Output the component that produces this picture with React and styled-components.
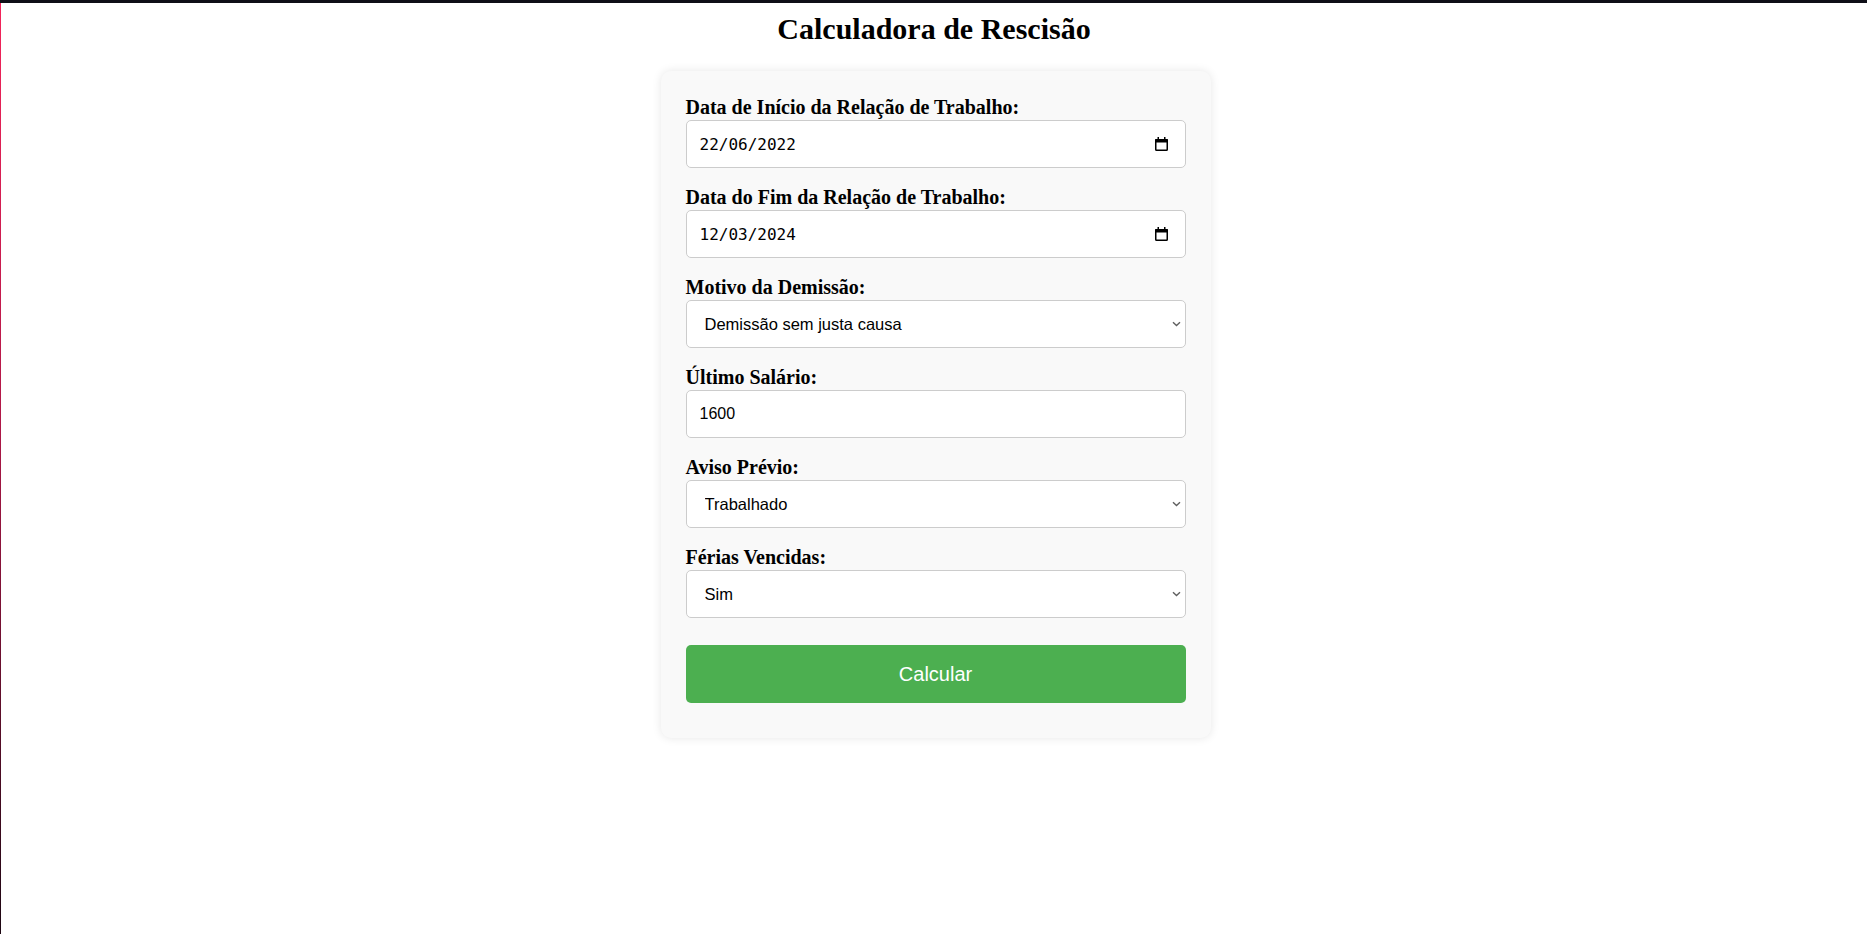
import React from "react";
import styled, { createGlobalStyle } from "styled-components";

const GlobalStyle = createGlobalStyle`
  html,
  body {
    margin: 0;
    background: #fff;
  }
  body {
    font-family: "Liberation Serif", "Times New Roman", serif;
    color: #000;
  }
`;

const Page = styled.div`
  display: flex;
  flex-direction: column;
  min-height: 100vh;
`;

const TopBar = styled.div`
  height: 3px;
  background: #0f0f17;
`;

const Body = styled.div`
  display: flex;
  flex: 1;
`;

const LeftEdge = styled.div`
  width: 1px;
  background: linear-gradient(#f3245a, #b01848 45%, #1c0612);
`;

const Main = styled.main`
  flex: 1;
  display: flex;
  flex-direction: column;
  align-items: center;
`;

const Title = styled.h1`
  margin: 9px 0 25px;
  font-size: 30px;
  line-height: 34px;
  font-weight: bold;
`;

const Card = styled.form`
  width: 500px;
  margin-left: 3px;
  padding: 25px 25px 35px;
  background: #f9f9f9;
  border-radius: 10px;
  box-shadow: 0 0 10px rgba(0, 0, 0, 0.1);
`;

const Field = styled.div`
  margin-bottom: 18px;
`;

const Label = styled.label`
  display: block;
  margin-bottom: 1px;
  font-size: 20px;
  line-height: 23px;
  font-weight: bold;
`;

const ControlWrap = styled.div`
  position: relative;
`;

const Input = styled.input`
  display: block;
  width: 100%;
  height: 48px;
  box-sizing: border-box;
  margin: 0;
  padding: 0 13px;
  border: 1px solid #ccc;
  border-radius: 5px;
  background: #fff;
  color: #000;
  font-family: ${({ $mono }) =>
    $mono ? `"DejaVu Sans Mono", "Liberation Mono", monospace` : `"Liberation Sans", Arial, sans-serif`};
  font-size: 16px;
  outline: none;
`;

const Select = styled.select`
  display: block;
  width: 100%;
  height: 48px;
  box-sizing: border-box;
  margin: 0;
  padding: 0 20px 0 18px;
  border: 1px solid #ccc;
  border-radius: 5px;
  background: #fff;
  color: #000;
  font-family: "Liberation Sans", Arial, sans-serif;
  font-size: 16.5px;
  appearance: none;
  outline: none;
`;

const Adornment = styled.span`
  position: absolute;
  top: 50%;
  right: ${({ $right }) => $right}px;
  transform: translateY(-50%);
  display: flex;
  pointer-events: none;
`;

const Button = styled.button`
  display: block;
  width: 100%;
  height: 58px;
  margin-top: 27px;
  border: none;
  border-radius: 5px;
  background: #4caf50;
  color: #fff;
  font-family: "Liberation Sans", Arial, sans-serif;
  font-size: 20px;
  cursor: pointer;
`;

const CalendarIcon = () => (
  <svg width="13" height="14" viewBox="0 0 13 14">
    <rect x="0.75" y="2.75" width="11.5" height="10.5" rx="0.8" fill="none" stroke="#000" strokeWidth="1.5" />
    <rect x="0" y="2" width="13" height="3.5" rx="0.8" fill="#000" />
    <rect x="2.5" y="0" width="1.5" height="2.5" fill="#000" />
    <rect x="9" y="0" width="1.5" height="2.5" fill="#000" />
  </svg>
);

const Chevron = () => (
  <svg width="9" height="6" viewBox="0 0 9 6">
    <path d="M1 1.2l3.5 3.3L8 1.2" fill="none" stroke="#5f5f5f" strokeWidth="1.4" />
  </svg>
);

const DateField = ({ id, label, value }) => (
  <Field>
    <Label htmlFor={id}>{label}</Label>
    <ControlWrap>
      <Input id={id} type="text" $mono defaultValue={value} />
      <Adornment $right={18}>
        <CalendarIcon />
      </Adornment>
    </ControlWrap>
  </Field>
);

const SelectField = ({ id, label, options }) => (
  <Field>
    <Label htmlFor={id}>{label}</Label>
    <ControlWrap>
      <Select id={id} defaultValue={options[0]}>
        {options.map(o => (
          <option key={o}>{o}</option>
        ))}
      </Select>
      <Adornment $right={5}>
        <Chevron />
      </Adornment>
    </ControlWrap>
  </Field>
);

export default function App() {
  return (
    <Page>
      <GlobalStyle />
      <TopBar />
      <Body>
        <LeftEdge />
        <Main>
          <Title>Calculadora de Rescisão</Title>
          <Card onSubmit={e => e.preventDefault()}>
            <DateField id="inicio" label="Data de Início da Relação de Trabalho:" value="22/06/2022" />
            <DateField id="fim" label="Data do Fim da Relação de Trabalho:" value="12/03/2024" />
            <SelectField
              id="motivo"
              label="Motivo da Demissão:"
              options={[
                "Demissão sem justa causa",
                "Demissão com justa causa",
                "Pedido de demissão",
                "Acordo entre as partes"
              ]}
            />
            <Field>
              <Label htmlFor="salario">Último Salário:</Label>
              <Input id="salario" type="number" defaultValue="1600" />
            </Field>
            <SelectField id="aviso" label="Aviso Prévio:" options={["Trabalhado", "Indenizado"]} />
            <SelectField id="ferias" label="Férias Vencidas:" options={["Sim", "Não"]} />
            <Button type="submit">Calcular</Button>
          </Card>
        </Main>
      </Body>
    </Page>
  );
}
